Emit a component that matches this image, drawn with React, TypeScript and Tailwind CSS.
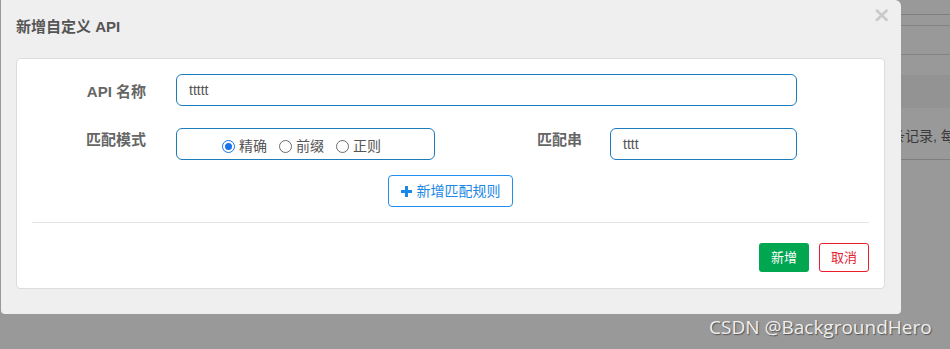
import React from "react";

const cjk = { fontFamily: '"Liberation Sans", "Noto Sans CJK SC", sans-serif' };

function Radio({ checked, label }: { checked?: boolean; label: string }) {
  return (
    <label className="flex items-center gap-[4px]">
      {checked ? (
        <span className="w-[13px] h-[13px] rounded-full border-[1.5px] border-[#1a73e8] flex items-center justify-center bg-white">
          <span className="w-[7px] h-[7px] rounded-full bg-[#1a73e8]" />
        </span>
      ) : (
        <span className="w-[13px] h-[13px] rounded-full border border-[#6b6b6b] bg-white" />
      )}
      <span className="text-[14px] text-[#555] leading-[16px]">{label}</span>
    </label>
  );
}

export default function App() {
  return (
    <div className="relative w-[950px] h-[349px] bg-[#999999] overflow-hidden" style={cjk}>
      {/* underlying page (behind overlay) */}
      <div className="flex flex-col pl-[880px] w-full">
        <div className="h-[14px]" />
        <div className="h-px bg-[#7e7e7e]" />
        <div className="h-[10px]" />
        <div className="h-px bg-[#838383]" />
        <div className="h-[28px]" />
        <div className="h-px bg-[#838383]" />
        <div className="h-[20px]" />
        <div className="h-[33px] bg-[#939393]" />
        <div className="h-[19px]" />
        <div className="text-[14px] leading-[18px] text-[#3a3a3a] -ml-[3px] whitespace-nowrap">共条记录, 每</div>
        <div className="h-[14px]" />
        <div className="h-px bg-[#7e7e7e]" />
      </div>

      {/* modal */}
      <div className="absolute left-px top-0 w-[900px] h-[314px] bg-[#efefef] rounded-b-[4px] rounded-tr-[6px] flex flex-col">
        <div className="h-[58px] flex items-start justify-between pl-[15px] pr-[10px]">
          <div className="pt-[18px] text-[15px] leading-[17px] font-bold text-[#555]">新增自定义 API</div>
          <div className="pt-[4px] text-[22px] leading-[22px] font-bold text-[#c9c9c9]" style={{ fontFamily: '"DejaVu Sans", sans-serif' }}>×</div>
        </div>

        <div className="ml-[15px] w-[869px] h-[231px] bg-white border border-[#dcdcdc] rounded-[4px] px-[15px] pt-[15px] flex flex-col">
          {/* row 1 */}
          <div className="flex items-start h-[32px]">
            <div className="w-[114px] text-right pt-[9px] text-[15px] leading-[18px] font-bold text-[#666]">API 名称</div>
            <div className="ml-[30px] w-[621px] h-[32px] border border-[#1c7cbb] rounded-[6px] flex items-center pl-[12px] text-[14px] text-[#555]">ttttt</div>
          </div>
          {/* row 2 */}
          <div className="flex items-start h-[32px] mt-[22px]">
            <div className="w-[114px] text-right pt-[3px] text-[15px] leading-[18px] font-bold text-[#666]">匹配模式</div>
            <div className="ml-[30px] w-[259px] h-[32px] border border-[#1c7cbb] rounded-[6px] flex items-center justify-center gap-[12px] pt-[4px] pr-[8px]">
              <Radio checked label="精确" />
              <Radio label="前缀" />
              <Radio label="正则" />
            </div>
            <div className="w-[147px] text-right pt-[3px] text-[15px] leading-[18px] font-bold text-[#666]">匹配串</div>
            <div className="ml-[28px] w-[187px] h-[32px] border border-[#1c7cbb] rounded-[6px] flex items-center pl-[12px] text-[14px] text-[#555]">tttt</div>
          </div>
          {/* add rule */}
          <div className="flex justify-center mt-[15px]">
            <button className="w-[125px] h-[32px] border border-[#1e8ff0] rounded-[4px] flex items-center justify-center gap-[5px] text-[14px] text-[#1a88e6] bg-white">
              <svg width="11" height="11" viewBox="0 0 11 11">
                <rect x="4" y="0" width="3" height="11" fill="#1a88e6" />
                <rect x="0" y="4" width="11" height="3" fill="#1a88e6" />
              </svg>
              <span>新增匹配规则</span>
            </button>
          </div>
          <div className="h-px bg-[#e4e4e4] mt-[15px]" />
          <div className="flex justify-end gap-[10px] mt-[20px]">
            <button className="w-[50px] h-[29px] rounded-[3px] bg-[#00a650] text-white text-[13px]">新增</button>
            <button className="w-[50px] h-[29px] rounded-[3px] border border-[#ec1c2c] bg-white text-[#e5212f] text-[13px]">取消</button>
          </div>
        </div>
      </div>

      {/* watermark */}
      <div
        className="absolute left-[709px] top-[316px] text-[19px] leading-[22px] text-[#efefef] whitespace-nowrap"
        style={{ fontFamily: '"Open Sans", sans-serif', textShadow: "1px 1px 1px #555" }}
      >
        CSDN @BackgroundHero
      </div>
    </div>
  );
}
